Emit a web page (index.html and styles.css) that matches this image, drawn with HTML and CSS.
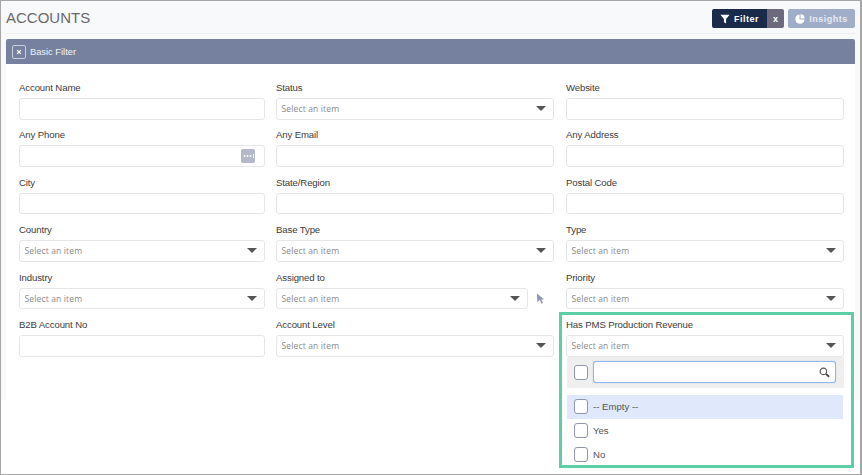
FILE: index.html
```html
<!DOCTYPE html>
<html lang="en">
<head>
<meta charset="utf-8">
<title>Accounts</title>
<link rel="stylesheet" href="styles.css">
</head>
<body>
<div class="frame">
  <header class="topbar">
    <h1 class="title">ACCOUNTS</h1>
    <div class="actions">
      <div class="filter-group">
        <button class="btn-filter"><svg class="ico" viewBox="0 0 12 12"><path d="M0.500 1h11L7.300 6v5.500L4.700 10V6z" fill="#fff"/></svg>Filter</button>
        <button class="btn-x">x</button>
      </div>
      <button class="btn-insights"><svg class="ico" viewBox="0 0 12 12"><path d="M5.400 0.600A5.500 5.500 0 1 0 11.400 6.600H5.400z" fill="#fff"/><path d="M6.600 0.400A5.200 5.200 0 0 1 11.600 5.400H6.600z" fill="#fff"/></svg>Insights</button>
    </div>
  </header>
  <div class="content">
    <div class="banner">
      <span class="collapse"><svg viewBox="0 0 8 8" class="collapse-x"><path d="M1.500 1.500l5 5M6.500 1.500l-5 5" stroke="#fff" stroke-width="1.700"/></svg></span>
      <span>Basic Filter</span>
    </div>
    <form class="form">
      <div class="field"><label>Account Name</label><div class="control"></div></div>
      <div class="field"><label>Status</label><div class="control select"><span>Select an item</span><i class="caret"></i></div></div>
      <div class="field"><label>Website</label><div class="control"></div></div>

      <div class="field"><label>Any Phone</label><div class="control has-more"><span class="more"><svg viewBox="0 0 14 14" class="more-dots"><circle cx="3.500" cy="7" r="0.900" fill="#fff"/><circle cx="6.500" cy="7" r="0.900" fill="#fff"/><circle cx="9.500" cy="7" r="0.900" fill="#fff"/><path d="M12.500 5v4" stroke="#fff" stroke-width="0.800"/></svg></span></div></div>
      <div class="field"><label>Any Email</label><div class="control"></div></div>
      <div class="field"><label>Any Address</label><div class="control"></div></div>

      <div class="field"><label>City</label><div class="control"></div></div>
      <div class="field"><label>State/Region</label><div class="control"></div></div>
      <div class="field"><label>Postal Code</label><div class="control"></div></div>

      <div class="field"><label>Country</label><div class="control select"><span>Select an item</span><i class="caret"></i></div></div>
      <div class="field"><label>Base Type</label><div class="control select"><span>Select an item</span><i class="caret"></i></div></div>
      <div class="field"><label>Type</label><div class="control select"><span>Select an item</span><i class="caret"></i></div></div>

      <div class="field"><label>Industry</label><div class="control select"><span>Select an item</span><i class="caret"></i></div></div>
      <div class="field"><label>Assigned to</label>
        <div class="with-pointer">
          <div class="control select grow"><span>Select an item</span><i class="caret"></i></div>
          <svg class="pointer" viewBox="0 0 10 12"><path d="M1 0.500l8 6.200-3.200.3 2 4-1.600.8-1.900-4L1.500 10z" fill="#8c98b8"/></svg>
        </div>
      </div>
      <div class="field"><label>Priority</label><div class="control select"><span>Select an item</span><i class="caret"></i></div></div>

      <div class="field"><label>B2B Account No</label><div class="control"></div></div>
      <div class="field"><label>Account Level</label><div class="control select"><span>Select an item</span><i class="caret"></i></div></div>
      <div class="field dropdown-host"><label>Has PMS Production Revenue</label>
        <div class="control select"><span>Select an item</span><i class="caret"></i></div>
        <div class="dropdown">
          <div class="dd-search">
            <span class="check"></span>
            <div class="search-box"><svg class="lens" viewBox="0 0 12 12"><circle cx="4.800" cy="4.800" r="3.500" fill="none" stroke="#555" stroke-width="1.300"/><path d="M7.500 7.500l3.600 3.200" stroke="#444" stroke-width="2"/></svg></div>
          </div>
          <ul class="dd-list">
            <li class="active"><span class="check"></span>-- Empty --</li>
            <li><span class="check"></span>Yes</li>
            <li><span class="check"></span>No</li>
          </ul>
        </div>
      </div>
    </form>
  </div>
  <div class="highlight"></div>
</div>
</body>
</html>
```

FILE: styles.css
```css
* { box-sizing: border-box; }
html, body { margin: 0; padding: 0; }
body { background: #fff; font-family: "Liberation Sans", Arial, sans-serif; color: #333; }
.frame {
  position: relative;
  width: 862px;
  height: 475px;
  border: 1px solid #a6a6a6;
  border-width: 1px 2px 1px 1px;
  overflow: hidden;
  background: #fff;
}
.topbar {
  height: 33px;
  background: linear-gradient(#eceef1, #eceef1) center bottom / calc(100% - 10px) 1px no-repeat, #f8f9fb;
  padding: 0 5px;
  display: flex;
  align-items: center;
  justify-content: space-between;
}
.title { margin: 0; font-size: 15px; font-weight: 400; color: #6a6a6a; line-height: 33px; }
.actions { display: flex; gap: 4px; padding-top: 2px; }
.filter-group { display: flex; height: 19px; border-radius: 2px; overflow: hidden; }
button { border: 0; margin: 0; padding: 0; font-family: inherit; font-weight: 700; font-size: 9px; letter-spacing: 0.5px; color: #fff; display: flex; align-items: center; justify-content: center; }
.btn-filter { width: 55px; background: #1a2a4a; gap: 4px; }
.btn-x { width: 17px; background: #6e6a7e; letter-spacing: 0; }
.btn-insights { width: 67px; height: 19px; background: #a0adc9; border-radius: 2px; gap: 4px; color: #e8ebf2; }
.ico { width: 10px; height: 10px; }
.content {
  height: 366px;
  padding: 5px 5px 0;
  background: linear-gradient(#f8f9fb, #f8f9fb) left top / 5px 100% no-repeat,
              linear-gradient(#f8f9fb, #f8f9fb) right top / 5px 100% no-repeat,
              linear-gradient(#f8f9fb, #f8f9fb) left top / 100% 5px no-repeat;
}
.banner {
  height: 25px;
  background: #75819f;
  border-radius: 2px 2px 0 0;
  color: #f2f4f8;
  font-size: 9.300px;
  display: flex;
  align-items: center;
  gap: 4px;
  padding-left: 6px;
}
.collapse {
  width: 14px; height: 14px;
  border: 1px solid #c9cfdd;
  border-radius: 2px;
  display: flex; align-items: center; justify-content: center;
}
.collapse-x { width: 6px; height: 6px; }
.form {
  display: grid;
  grid-template-columns: 246px 279px 278px;
  column-gap: 11px;
  grid-auto-rows: 47.400px;
  padding: 17px 0 0 13px;
}
.field { display: flex; flex-direction: column; position: relative; }
.field:nth-child(3n+2) { padding-right: 1px; }
.field label { font-size: 9.600px; letter-spacing: -0.120px; line-height: 14px; height: 17px; color: #3b3b3b; }
.control {
  height: 21.600px;
  border: 1px solid #e6e6e9;
  border-radius: 3px;
  background: #fff;
  display: flex;
  align-items: center;
  position: relative;
  font-family: "Open Sans", "Liberation Sans", sans-serif;
  font-size: 8.500px;
  letter-spacing: 0.150px;
  color: #8a8a8a;
  padding: 0 4.500px;
}
.select { justify-content: space-between; }
.caret { width: 0; height: 0; border: 5px solid transparent; border-top: 5px solid #555; border-bottom: 0; margin-right: 3px; }
.has-more { justify-content: flex-end; padding-right: 9px; }
.more {
  width: 14px; height: 14px; border-radius: 2px; background: #b3b9c9;
  display: flex; align-items: center; justify-content: center;
}
.more-dots { width: 14px; height: 14px; }
.with-pointer { display: flex; align-items: center; }
.grow { flex: 1; margin-right: 8px; }
.pointer { width: 9px; height: 11px; margin-right: 9px; }
.dropdown {
  position: absolute;
  left: 1px; right: 0; top: 39px;
  background: #fff;
  z-index: 2;
}
.dd-search {
  height: 31px;
  background: #efefef;
  border-radius: 2px 2px 0 0;
  display: flex;
  align-items: center;
  padding: 0 8px 0 7px;
  gap: 5px;
}
.search-box {
  flex: 1;
  height: 22px;
  background: #fff;
  border: 1px solid #8fb4ec;
  box-shadow: 0 0 1px #8fb4ec;
  border-radius: 3px;
  display: flex; align-items: center; justify-content: flex-end;
  padding-right: 5px;
}
.lens { width: 11px; height: 11px; }
.check {
  width: 14px; height: 15px;
  border: 1px solid #9097a8;
  border-radius: 3px;
  background: #fff;
  flex: none;
}
.dd-list { list-style: none; margin: 7px 0 0; padding: 0; }
.dd-list li {
  height: 23.700px;
  display: flex; align-items: center; gap: 5px;
  padding-left: 7px;
  font-size: 9.600px;
  color: #555;
}
.dd-list li.active { background: #dfe9fb; margin-right: 1px; }
.highlight {
  position: absolute;
  left: 558px; top: 311px;
  width: 295px; height: 156px;
  border: 3px solid #5ccfa6;
  pointer-events: none;
  z-index: 3;
}
```
